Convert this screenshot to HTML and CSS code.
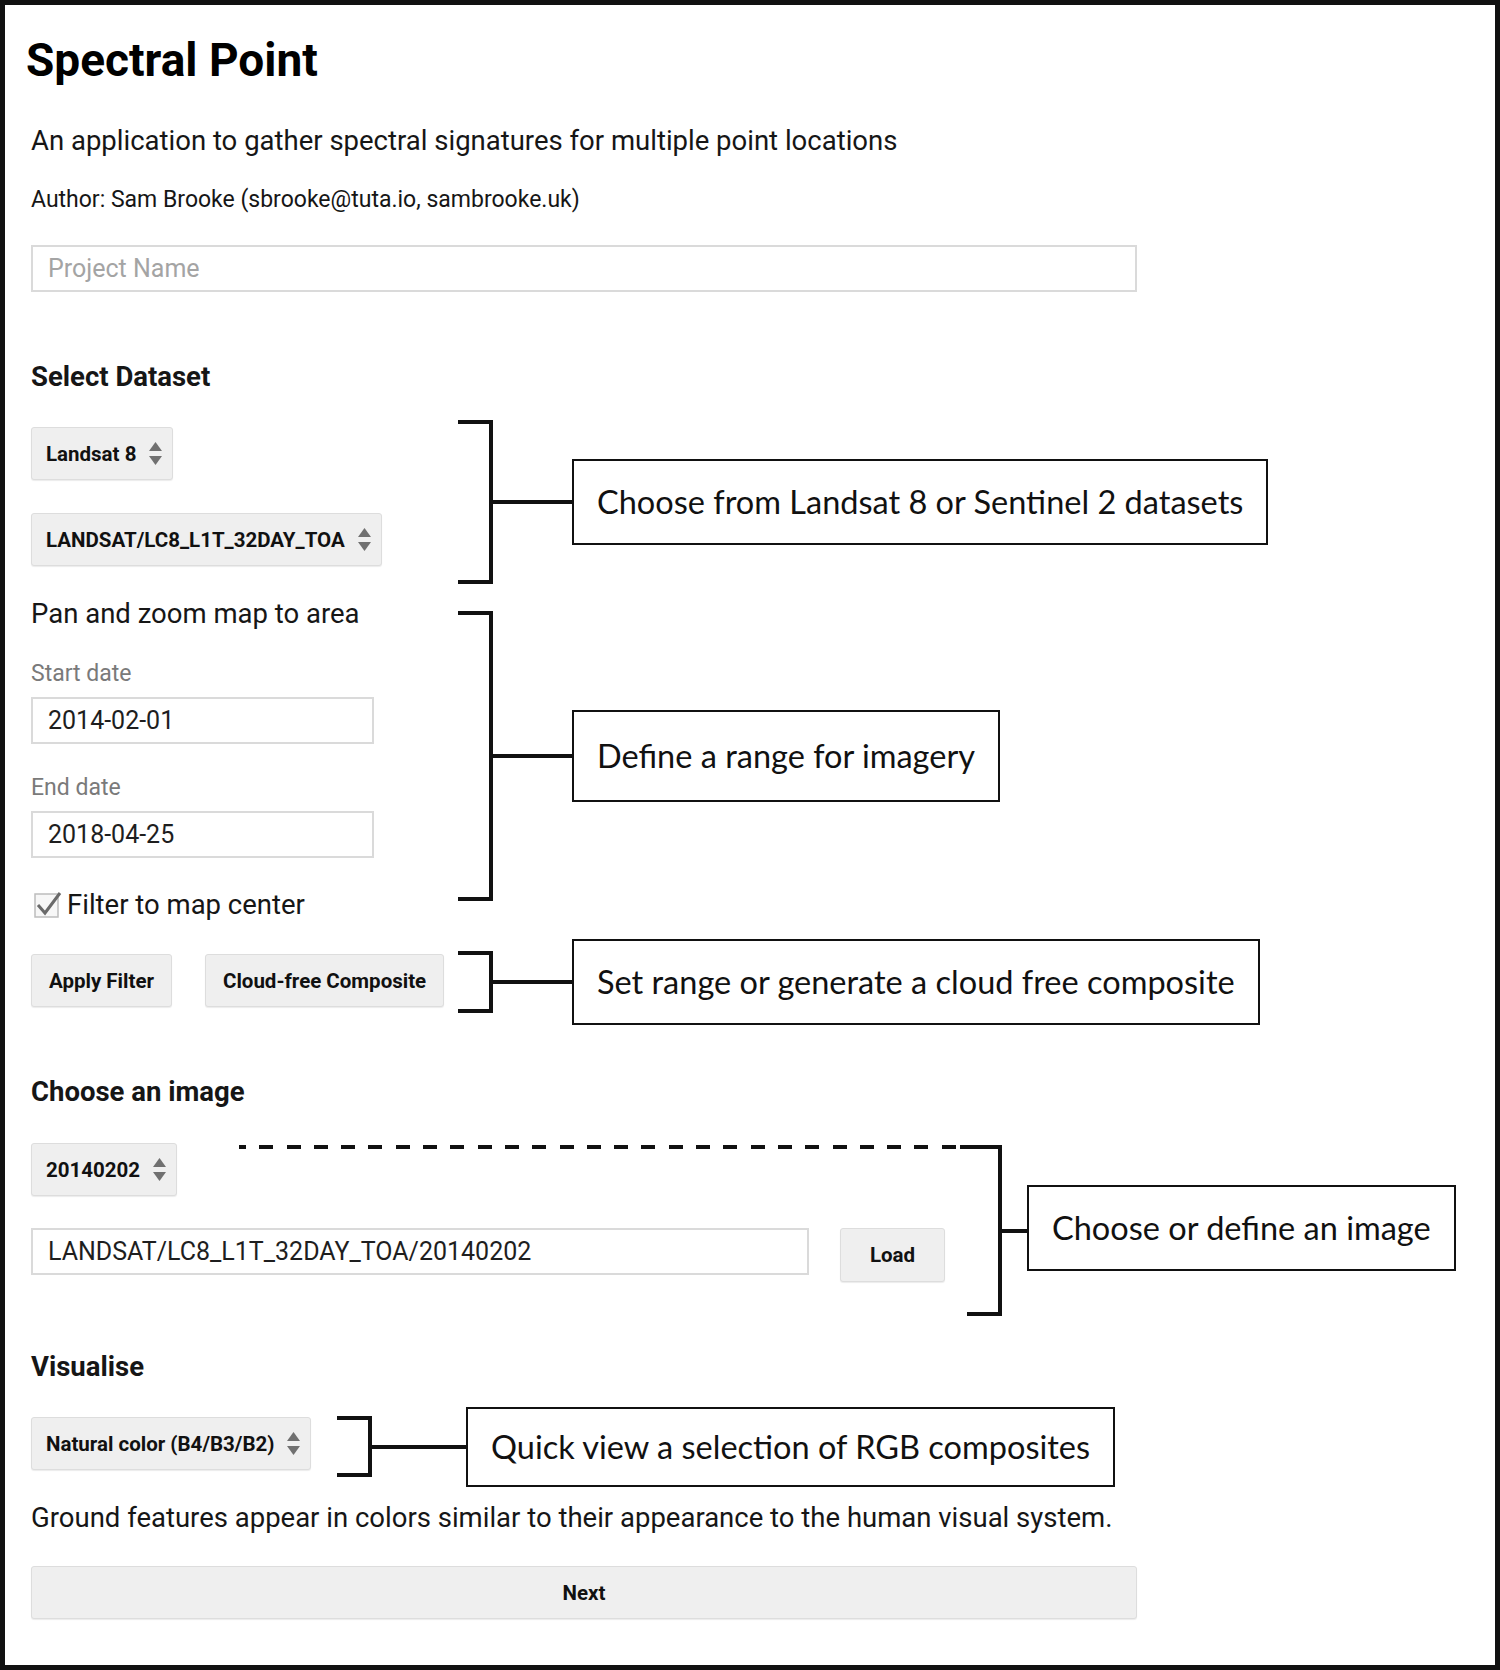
FILE: index.html
```html
<!DOCTYPE html>
<html>
  <head>
    <meta charset="utf-8" />
    <title>Spectral Point</title>
    <link rel="stylesheet" href="styles.css">
  </head>
  <body>
    <div class="frame">
      <div class="panel">
        <h1 class="title">Spectral Point</h1>
        <p class="lead">An application to gather spectral signatures for multiple point locations</p>
        <p class="author">Author: Sam Brooke (sbrooke@tuta.io, sambrooke.uk)</p>
        <input class="field field-wide" type="text" placeholder="Project Name" />

        <h2 class="section-title">Select Dataset</h2>
        <div class="group group-dataset">
          <div class="select">
            <span>Landsat 8</span>
            <svg class="updown" width="13" height="23" viewBox="0 0 13 23"><polygon points="6.5,0 13,9 0,9" /><polygon points="0,14 13,14 6.5,23" /></svg>
          </div>
          <div class="select">
            <span>LANDSAT/LC8_L1T_32DAY_TOA</span>
            <svg class="updown" width="13" height="23" viewBox="0 0 13 23"><polygon points="6.5,0 13,9 0,9" /><polygon points="0,14 13,14 6.5,23" /></svg>
          </div>
          <div class="callout callout-dataset">
            <div class="bracket"></div>
            <div class="link"></div>
            <div class="note">Choose from Landsat 8 or Sentinel 2 datasets</div>
          </div>
        </div>

        <div class="group group-range">
          <p class="step">Pan and zoom map to area</p>
          <label class="field-label">Start date</label>
          <input class="field field-date" type="text" value="2014-02-01" />
          <label class="field-label">End date</label>
          <input class="field field-date" type="text" value="2018-04-25" />
          <div class="check-row">
            <svg class="check" width="28" height="26" viewBox="0 0 28 26">
              <rect x="1" y="2" width="23" height="23" fill="#f7f7f7" stroke="#bdbdbd" stroke-width="1.5" />
              <path d="M4 13 L11 21 L26 1" fill="none" stroke="#6a6a6a" stroke-width="3" />
            </svg>
            <span>Filter to map center</span>
          </div>
          <div class="callout callout-range">
            <div class="bracket"></div>
            <div class="link"></div>
            <div class="note note-tall">Define a range for imagery</div>
          </div>
        </div>

        <div class="group group-actions">
          <button class="btn">Apply Filter</button>
          <button class="btn">Cloud-free Composite</button>
          <div class="callout callout-actions">
            <div class="bracket"></div>
            <div class="link"></div>
            <div class="note">Set range or generate a cloud free composite</div>
          </div>
        </div>

        <h2 class="section-title">Choose an image</h2>
        <div class="group group-image">
          <div class="pick-row">
            <div class="select">
              <span>20140202</span>
              <svg class="updown" width="13" height="23" viewBox="0 0 13 23"><polygon points="6.5,0 13,9 0,9" /><polygon points="0,14 13,14 6.5,23" /></svg>
            </div>
            <div class="dash"></div>
          </div>
          <div class="asset-row">
            <input class="field field-asset" type="text" value="LANDSAT/LC8_L1T_32DAY_TOA/20140202" />
            <button class="btn btn-load">Load</button>
          </div>
          <div class="callout callout-image">
            <div class="bracket"></div>
            <div class="link link-short"></div>
            <div class="note note-raised">Choose or define an image</div>
          </div>
        </div>

        <h2 class="section-title">Visualise</h2>
        <div class="group group-visual">
          <div class="select">
            <span>Natural color (B4/B3/B2)</span>
            <svg class="updown" width="13" height="23" viewBox="0 0 13 23"><polygon points="6.5,0 13,9 0,9" /><polygon points="0,14 13,14 6.5,23" /></svg>
          </div>
          <div class="callout callout-visual">
            <div class="bracket"></div>
            <div class="link link-long"></div>
            <div class="note note-short">Quick view a selection of RGB composites</div>
          </div>
        </div>
        <p class="caption">Ground features appear in colors similar to their appearance to the human visual system.</p>
        <button class="btn btn-next">Next</button>
      </div>
    </div>
  </body>
</html>
```

FILE: styles.css
```css
html,
body {
  margin: 0;
}
body {
  font-family: Roboto, "Liberation Sans", Arial, sans-serif;
  color: #161616;
  background-color: #fff;
}
.frame {
  box-sizing: border-box;
  height: 1670px;
  border: 5px solid #111;
  padding: 0 26px;
}
.panel {
  display: flex;
  flex-direction: column;
  align-items: flex-start;
}
.title {
  margin: 28px 0 0 -5px;
  font-size: 46px;
  line-height: 54px;
  font-weight: 700;
  color: #000;
}
.lead {
  margin: 38px 0 0;
  font-size: 27.5px;
  line-height: 32px;
}
.author {
  margin: 29px 0 0;
  font-size: 23px;
  line-height: 28px;
}
.field {
  box-sizing: border-box;
  height: 47px;
  margin: 0;
  padding: 0 15px;
  border: 2px solid #dadada;
  border-radius: 0;
  background-color: #fff;
  color: #1e1e1e;
  font-family: Roboto, "Liberation Sans", Arial, sans-serif;
  font-size: 25px;
  outline: none;
}
.field::placeholder {
  color: #a4a4a4;
}
.field-wide {
  width: 1106px;
  margin-top: 31px;
}
.field-date {
  width: 343px;
}
.field-asset {
  width: 778px;
}
.section-title {
  margin: 69px 0 0;
  font-size: 27.5px;
  line-height: 32px;
  font-weight: 700;
}
.group {
  position: relative;
  align-self: stretch;
  display: flex;
  flex-direction: column;
  align-items: flex-start;
}
.group-dataset {
  margin-top: 34px;
}
.group-range {
  margin-top: 32px;
}
.group-actions {
  flex-direction: row;
  gap: 33px;
  margin-top: 33px;
}
.group-image {
  margin-top: 35px;
}
.group-visual {
  margin-top: 34px;
}
.select {
  display: flex;
  align-items: center;
  gap: 13px;
  box-sizing: border-box;
  height: 53px;
  padding: 0 10px 0 14px;
  background-color: #efefef;
  border: 1px solid #dddddd;
  border-radius: 3px;
  box-shadow: 0 1px 1px rgba(0, 0, 0, 0.08);
  font-size: 20.5px;
  font-weight: 700;
  color: #111;
}
.select + .select {
  margin-top: 33px;
}
.updown {
  fill: #707070;
  flex: none;
}
.step {
  margin: 0;
  font-size: 27.5px;
  line-height: 32px;
}
.field-label {
  margin: 30px 0 9px;
  font-size: 23px;
  line-height: 28px;
  color: #7a7a7a;
}
.check-row {
  display: flex;
  align-items: center;
  gap: 5px;
  margin-top: 31px;
  padding-left: 3px;
  font-size: 27.5px;
  line-height: 32px;
}
.check {
  flex: none;
}
.btn {
  display: flex;
  align-items: center;
  justify-content: center;
  box-sizing: border-box;
  height: 53px;
  margin: 0;
  padding: 0 17px;
  background-color: #efefef;
  border: 1px solid #dddddd;
  border-radius: 3px;
  box-shadow: 0 1px 1px rgba(0, 0, 0, 0.08);
  color: #111;
  font-family: Roboto, "Liberation Sans", Arial, sans-serif;
  font-size: 20.5px;
  font-weight: 700;
}
.pick-row {
  display: flex;
  width: 936px;
}
.dash {
  flex: none;
  width: 728px;
  height: 4px;
  margin: 2px 0 0 auto;
  background-image: repeating-linear-gradient(to right, #111 0, #111 14px, transparent 14px, transparent 27.3px);
  background-position: -7px 0;
}
.asset-row {
  display: flex;
  align-items: flex-start;
  gap: 31px;
  margin-top: 32px;
}
.btn-load {
  height: 54px;
  min-width: 105px;
}
.caption {
  margin: 32px 0 0;
  font-size: 27.5px;
  line-height: 32px;
}
.btn-next {
  width: 1106px;
  margin-top: 32px;
}

/* annotation callouts */
.callout {
  position: absolute;
  display: flex;
  align-items: center;
  width: max-content;
}
.callout-dataset {
  left: 427px;
  top: -7px;
  bottom: -18px;
}
.callout-range {
  left: 427px;
  top: 13px;
  bottom: 20px;
}
.callout-actions {
  left: 427px;
  top: -3px;
  bottom: -6px;
}
.callout-image {
  left: 936px;
  top: 2px;
  bottom: -34px;
}
.callout-visual {
  left: 306px;
  top: -1px;
  bottom: -7px;
}
.bracket {
  align-self: stretch;
  box-sizing: border-box;
  width: 35px;
  border: 4px solid #111;
  border-left: none;
}
.link {
  width: 79px;
  height: 4px;
  background-color: #111;
}
.link-short {
  width: 25px;
}
.link-long {
  width: 94px;
}
.note {
  padding: 25px 23px;
  border: 2px solid #111;
  background-color: #fff;
  color: #111;
  font-family: Lato, "Open Sans", sans-serif;
  font-size: 32.5px;
  line-height: 32px;
  white-space: nowrap;
}
.note-tall {
  padding: 28px 23px;
}
.note-short {
  padding: 22px 23px;
}
.note-raised {
  margin-bottom: 6px;
}
```
